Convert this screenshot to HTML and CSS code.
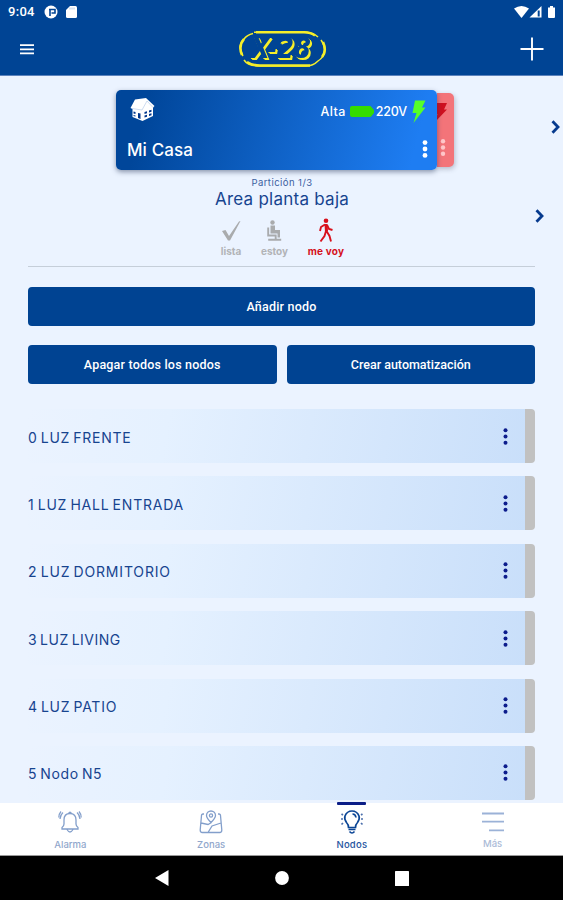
FILE: index.html
```html
<!DOCTYPE html>
<html lang="es">
<head>
<meta charset="utf-8">
<title>Nodos</title>
<link rel="stylesheet" href="styles.css">
</head>
<body>
<div class="app">
  <header class="top">
    <div class="status">
      <span class="clock">9:04</span>
      <svg class="st-app" width="14" height="14" viewBox="0 0 14 14"><circle cx="7" cy="7" r="6.500" fill="#fff"/><path d="M6 11V4.500M5 4.500h6v3.500H7.500" fill="none" stroke="#004494" stroke-width="1.600"/></svg>
      <svg class="st-sd" width="11" height="12" viewBox="0 0 11 12"><path d="M4 0h5.500Q11 0 11 1.500v9q0 1.500-1.500 1.500h-8Q0 12 0 10.500V4z" fill="#fff"/><path d="M4 1.500v2M6 1.500v2M8 1.500v2" stroke="#9db8db" stroke-width=".8"/></svg>
      <span class="grow"></span>
      <svg width="43" height="14" viewBox="0 0 43 14"><path d="M0 3.500Q7.500-1.500 15 3.500L7.500 13z" fill="#fff"/><path d="M27.500 1v11.500H15.500z" fill="#fff"/><path d="M24.700 5.500v6" stroke="#004494" stroke-width="2"/><path d="M36 1h3v1.500h2V12q0 1-1 1h-5q-1 0-1-1V2.500h2z" fill="#fff"/></svg>
    </div>
    <div class="bar">
      <svg class="burger" width="14" height="11" viewBox="0 0 14 11"><path d="M0 1.200h14M0 5.300h14M0 9.400h14" stroke="#fff" stroke-width="1.700"/></svg>
      <svg class="logo" width="90" height="40" viewBox="0 0 90 40">
        <path d="M16 3.200H68Q76 4 80 8M83 11Q92 24 80 32Q75 37 68 37H22Q10 37 6 31M5 27Q-1 17 6 10Q9 6 15 4.500" fill="none" stroke="#f5ee2a" stroke-width="1.500"/>
        <path d="M18 3.300H66Q73 3.500 77 6.500M72 36.500H22Q14 36.500 9 33M85 13Q89 22 84 28M4 26Q0 17 6 10" fill="none" stroke="#f5ee2a" stroke-width="2.600"/>
        <text class="logo-word" x="13" y="29" textLength="60" lengthAdjust="spacingAndGlyphs">X-28</text>
      </svg>
      <svg class="plus" width="24" height="24" viewBox="0 0 24 24"><path d="M12 .5v23M.5 12h23" stroke="#fff" stroke-width="1.900"/></svg>
    </div>
  </header>

  <main class="content">
    <section class="homes">
      <div class="stack">
        <article class="card">
          <svg class="house" width="25" height="24" viewBox="0 0 25 24"><path d="M5 1.500L16 0l8.500 8-1.500 1.500V18l-10.500 5L2.500 19v-8L.5 10z" fill="#fff"/><path d="M2 10.500l10 1.500 5-9 6 6.500" fill="none" stroke="#b9cdea" stroke-width=".7"/><path d="M3.500 13.500l2 .5v2l-2-.5zM3.500 17l2 .5v1l-2-.5zM8 15l2.500.5V21L8 20zM14.500 14l2.500-.7v2l-2.500.7zM14.500 17.500l2.500-.7v2l-2.500.7zM19 12.500l2.500-.7v2l-2.500.7zM19 16l2.500-.7v2l-2.500.7z" fill="#00368c"/></svg>
          <div class="power">
            <span class="level">Alta</span>
            <svg class="batt" width="24" height="11" viewBox="0 0 24 11"><path d="M2 0h18q1 0 1.300 1L24 4v3l-2.500 3q-.5 1-1.500 1H2Q0 11 0 9V2Q0 0 2 0z" fill="#35dc00"/></svg>
            <span class="volts">220V</span>
            <svg class="bolt" width="14" height="23" viewBox="0 0 14 23"><path d="M3 .5h10.500L10 7.500h3.500L1.500 23 4.500 13H.5z" fill="#55ff28"/></svg>
          </div>
          <h2 class="home-name">Mi Casa</h2>
          <svg class="card-dots" width="6" height="18" viewBox="0 0 6 18"><g fill="#fff"><circle cx="3" cy="2.600" r="2.400"/><circle cx="3" cy="9" r="2.400"/><circle cx="3" cy="15.400" r="2.400"/></g></svg>
        </article>
        <article class="next">
          <svg width="12" height="19" viewBox="0 0 12 19"><path d="M2 0h10L9 6.500h3L0 19l2.500-8H0z" fill="#ce1120"/></svg>
          <svg class="next-dots" width="6" height="17" viewBox="0 0 6 17"><g fill="#ffc7c9"><circle cx="3" cy="2.300" r="2.200"/><circle cx="3" cy="8.500" r="2.200"/><circle cx="3" cy="14.700" r="2.200"/></g></svg>
        </article>
      </div>
      <svg class="go" width="9" height="14" viewBox="0 0 9 14"><path d="M1.500 1.300L7 7l-5.500 5.700" fill="none" stroke="#063a8e" stroke-width="2.800"/></svg>
    </section>

    <section class="area">
      <p class="part">Partición 1/3</p>
      <h1 class="area-name">Area planta baja</h1>
      <div class="modes">
        <div class="mode"><svg width="20" height="23" viewBox="0 0 20 23"><path d="M1 12l3.500-1 3.500 6L18 2.500l1.500-.5L9 21.500H7z" fill="#a9abad"/></svg><span>lista</span></div>
        <div class="mode estoy"><svg width="20" height="23" viewBox="0 0 20 23"><circle cx="7.500" cy="3.500" r="2.200" fill="#a9abad"/><path d="M5.500 6.500h4.500v4.500h5v7.500h-2.500v-4H5.500z" fill="#a9abad"/><path d="M3.200 8.500V16.500h7.500v4.500M3.200 20.700h13" fill="none" stroke="#a9abad" stroke-width="1.900"/></svg><span>estoy</span></div>
        <div class="mode voy"><svg width="20" height="25" viewBox="0 0 20 25"><circle cx="10" cy="2.700" r="2.300" fill="#d8111c"/><path d="M8.500 6h3l.5 7-3 1.500z" fill="#d8111c"/><path d="M9 6.500L5 9l-1 4M11 7l2 4 3.500 1M10 13l-1.500 5-4 5.500M10.500 13l3 5 1.500 5.500" fill="none" stroke="#d8111c" stroke-width="1.900"/></svg><span>me voy</span></div>
      </div>
      <svg class="go-area" width="9" height="14" viewBox="0 0 9 14"><path d="M1.500 1.300L7 7l-5.500 5.700" fill="none" stroke="#063a8e" stroke-width="2.800"/></svg>
    </section>

    <section class="actions">
      <button class="btn wide">Añadir nodo</button>
      <button class="btn off">Apagar todos los nodos</button>
      <button class="btn auto">Crear automatización</button>
    </section>

    <ul class="nodes">
      <li class="node"><span class="n0">0 LUZ FRENTE</span><svg class="dots" width="5" height="17" viewBox="0 0 5 17"><g fill="#0c1c8c"><circle cx="2.500" cy="2.200" r="2"/><circle cx="2.500" cy="8.500" r="2"/><circle cx="2.500" cy="14.800" r="2"/></g></svg></li>
      <li class="node"><span class="n1">1 LUZ HALL ENTRADA</span><svg class="dots" width="5" height="17" viewBox="0 0 5 17"><g fill="#0c1c8c"><circle cx="2.500" cy="2.200" r="2"/><circle cx="2.500" cy="8.500" r="2"/><circle cx="2.500" cy="14.800" r="2"/></g></svg></li>
      <li class="node"><span class="n2">2 LUZ DORMITORIO</span><svg class="dots" width="5" height="17" viewBox="0 0 5 17"><g fill="#0c1c8c"><circle cx="2.500" cy="2.200" r="2"/><circle cx="2.500" cy="8.500" r="2"/><circle cx="2.500" cy="14.800" r="2"/></g></svg></li>
      <li class="node"><span class="n3">3 LUZ LIVING</span><svg class="dots" width="5" height="17" viewBox="0 0 5 17"><g fill="#0c1c8c"><circle cx="2.500" cy="2.200" r="2"/><circle cx="2.500" cy="8.500" r="2"/><circle cx="2.500" cy="14.800" r="2"/></g></svg></li>
      <li class="node"><span class="n4">4 LUZ PATIO</span><svg class="dots" width="5" height="17" viewBox="0 0 5 17"><g fill="#0c1c8c"><circle cx="2.500" cy="2.200" r="2"/><circle cx="2.500" cy="8.500" r="2"/><circle cx="2.500" cy="14.800" r="2"/></g></svg></li>
      <li class="node"><span class="n5">5 Nodo N5</span><svg class="dots" width="5" height="17" viewBox="0 0 5 17"><g fill="#0c1c8c"><circle cx="2.500" cy="2.200" r="2"/><circle cx="2.500" cy="8.500" r="2"/><circle cx="2.500" cy="14.800" r="2"/></g></svg></li>
    </ul>
  </main>

  <nav class="tabs">
    <a class="tab"><svg width="24" height="24" viewBox="0 0 24 24" fill="none" stroke="#839fcb" stroke-width="1.300"><path d="M12 3.500Q6 3.500 6 10v4q0 2-2 3.500v1.500h16v-1.500q-2-1.500-2-3.500v-4q0-6.500-6-6.500zM9 19.500q3 5 6 0M10.500 3.500q1.500-2.500 3 0M5 2.500Q2.500 4.500 2 9M3 1.500Q.8 4 .8 7.500M19 2.500Q21.500 4.500 22 9M21 1.500q2.200 2.500 2.200 6"/></svg><span>Alarma</span></a>
    <a class="tab"><svg width="24" height="24" viewBox="0 0 24 24" fill="none" stroke="#839fcb" stroke-width="1.300"><path d="M12 12.500Q7.500 8 7.500 5.500a4.500 4.500 0 0 1 9 0Q16.500 8 12 12.500zM5 4H4Q2.500 4 2.500 5.500L1.200 20q0 2.500 2 2.500h17.600q2 0 2-2.500L21.500 5.500Q21.500 4 20 4h-1M2 13l7 1.500 3.500-2M9 22.500l4-6.500 9-3"/><circle cx="12" cy="5.500" r="1.600"/></svg><span>Zonas</span></a>
    <a class="tab on"><svg width="24" height="24" viewBox="0 0 24 24" fill="none" stroke="#0b4595" stroke-width="1.700"><path d="M8.500 17.500Q8.500 14.500 6.500 12.500 4 9 5 6 7 1 12 1t7 5q1 3-1.500 6.500-2 2-2 5zM8.500 19.500h7M9.500 21.500q2.500 3 5 0M12.500 4q3 0 3.500 3.500"/><path d="M1 9h2M1.500 4l1.500 1M1.500 14.500L3 13M21 9h2M21 5l1.500-1M21 13l1.500 1.500" stroke="#4b6fac"/></svg><span>Nodos</span></a>
    <a class="tab mas"><svg width="24" height="24" viewBox="0 0 24 24"><path d="M1 3.500h22M1 11.700h22M8 20.300h15" stroke="#9bb2d7" stroke-width="1.800"/></svg><span>Más</span></a>
  </nav>

  <footer class="system">
    <svg width="14" height="16" viewBox="0 0 14 16"><path d="M13.500 0v16L0 8z" fill="#fff"/></svg>
    <svg width="14" height="14" viewBox="0 0 14 14"><circle cx="7" cy="7" r="6.900" fill="#fff"/></svg>
    <svg width="14" height="15" viewBox="0 0 14 15"><rect width="14" height="15" rx=".6" fill="#fff"/></svg>
  </footer>
</div>
</body>
</html>
```
FILE: styles.css
```css
* { box-sizing: border-box; }
body { margin: 0; font-family: Inter, "Open Sans", sans-serif; color: #17448f; }
h1, h2, p, ul { margin: 0; padding: 0; font-weight: 400; }
svg { display: block; flex: none; }
.app { width: 563px; height: 900px; display: flex; flex-direction: column; overflow: hidden; background: #ebf3ff; }

.top { height: 76px; flex: none; background: #004494; border-bottom: 1px solid #5c83bd; }
.status { height: 24px; display: flex; align-items: center; padding: 0 6px 0 8px; }
.clock { font: 500 13px/24px Roboto, sans-serif; color: #fff; width: 36px; white-space: nowrap; letter-spacing: .3px; }
.st-sd { margin-left: 8px; }
.grow { flex: 1; }
.bar { height: 50px; display: flex; align-items: center; justify-content: space-between; padding: 0 19px 0 20px; }
.logo { margin-left: 11px; }
.logo-word { font: italic 700 29px "DejaVu Sans", sans-serif; fill: #004494; filter: drop-shadow(1.5px 1.2px 0 #f5ee2a) drop-shadow(1px 1px 0 #f5ee2a); }

.content { flex: 1; min-height: 0; overflow: hidden; }
.homes { height: 94px; padding: 14px 2px 0 116px; display: flex; justify-content: space-between; }
.stack { display: flex; align-items: flex-start; }
.card { width: 321px; height: 80px; border-radius: 5px; background: linear-gradient(105deg, #00469a 10%, #1e7df2 92%); box-shadow: 0 2px 5px rgba(40, 55, 90, .5); display: grid; grid-template-columns: 1fr auto; grid-template-rows: 41px 39px; padding: 0 9px 0 11px; z-index: 1; color: #fff; }
.house { margin: 8px 0 0 3px; }
.power { display: flex; align-items: center; font-size: 12.500px; font-weight: 500; padding-top: 1px; }
.level { letter-spacing: .4px; }
.batt { margin: 0 2px 0 4px; }
.volts { margin-right: 5px; letter-spacing: -.2px; }
.bolt { margin-right: 2px; }
.home-name { font-size: 17px; line-height: 20px; padding-top: 9px; font-weight: 500; letter-spacing: .1px; }
.card-dots { justify-self: end; margin-top: 9px; }
.next { width: 17px; height: 74px; margin-top: 3px; border-radius: 0 5px 5px 0; background: #f37479; box-shadow: 1px 2px 5px rgba(60, 60, 80, .3); padding-top: 10px; }
.next svg { margin-left: -2px; }
.next .next-dots { margin: 17px 0 0 3px; }
.go { margin: 30px 1px 0 0; }

.area { position: relative; height: 97px; margin: 0 28px; border-bottom: 1px solid #c5ced9; text-align: center; padding: 7px 0 0 1px; }
.part { font-size: 9.500px; line-height: 11px; color: #3b60a0; letter-spacing: .45px; }
.area-name { font-size: 17px; line-height: 22px; letter-spacing: .25px; }
.modes { display: flex; justify-content: center; padding-left: 1px; margin-top: 8px; }
.mode { width: 47px; display: flex; flex-direction: column; align-items: center; font: 700 10px/14px Inter, sans-serif; color: #b2b4b7; white-space: nowrap; }
.mode svg { height: 25px; }
.mode span { padding-top: 1px; }
.mode.estoy { width: 40px; }
.mode.voy { width: 63px; color: #d5101b; letter-spacing: .2px; }
.go-area { position: absolute; right: -9px; top: 39px; }

.actions { display: grid; grid-template-columns: 1fr 1fr; gap: 19px 10px; margin: 20px 28px 25px; }
.btn { height: 39px; border: 0; border-radius: 4px; background: #004392; color: #fff; font: 500 12.500px/39px Roboto, sans-serif; padding: 0; }
.wide { grid-column: 1 / -1; letter-spacing: .2px; }
.off { letter-spacing: .2px; }

.nodes { list-style: none; margin: 0 28px; display: grid; gap: 13.400px; }
.node { height: 54px; display: flex; align-items: center; justify-content: space-between; border-right: 10px solid #c1c1c1; border-radius: 4px; background: linear-gradient(100deg, #ebf3ff, #e5f1ff 28%, #c9dffa); padding-right: 17px; font-size: 14px; }
.node span { padding-top: 2px; word-spacing: -1.500px; }
.n0, .n4 { letter-spacing: .74px; }
.n1 { letter-spacing: .78px; }
.n2 { letter-spacing: .83px; }
.n3 { letter-spacing: .5px; }
.n5 { letter-spacing: .66px; }

.tabs { height: 53px; flex: none; background: #fff; border-bottom: 1px solid #999; display: grid; grid-template-columns: repeat(4, 1fr); }
.tab { display: flex; flex-direction: column; align-items: center; padding-top: 7px; font-size: 9.500px; line-height: 12px; color: #91a7cc; position: relative; font-weight: 500; }
.tab span { margin-top: 4px; padding-top: 1px; }
.tab.on { color: #2454a0; letter-spacing: .2px; }
.tab.on::before { content: ""; position: absolute; top: -1px; width: 29px; height: 3px; border-radius: 1px; background: #0b1e87; }
.mas { color: #abbbd7; }
.mas span { margin-top: 3px; }

.system { height: 44px; flex: none; background: #000; display: flex; align-items: center; justify-content: center; gap: 106px; }
```
